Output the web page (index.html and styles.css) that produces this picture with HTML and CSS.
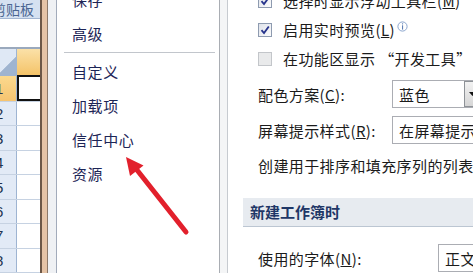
FILE: index.html
```html
<!DOCTYPE html>
<html>
<head>
    <title>Excel 选项</title>
    <link rel="stylesheet" href="styles.css">
</head>
<body>
    <div class="screen">
        <div class="sheet">
            <div class="ribbon-label">剪贴板</div>
            <div class="formula"></div>
            <div class="sheet-row head">
                <div class="corner"></div>
                <div class="col-head"></div>
            </div>
            <div class="sheet-row selected">
                <div class="row-head"><span>1</span></div>
                <div class="cell active"></div>
            </div>
            <div class="sheet-row"><div class="row-head"><span>2</span></div><div class="cell"></div></div>
            <div class="sheet-row"><div class="row-head"><span>3</span></div><div class="cell"></div></div>
            <div class="sheet-row"><div class="row-head"><span>4</span></div><div class="cell"></div></div>
            <div class="sheet-row"><div class="row-head"><span>5</span></div><div class="cell"></div></div>
            <div class="sheet-row"><div class="row-head"><span>6</span></div><div class="cell"></div></div>
            <div class="sheet-row"><div class="row-head"><span>7</span></div><div class="cell"></div></div>
            <div class="sheet-row"><div class="row-head"><span>8</span></div><div class="cell"></div></div>
        </div>

        <div class="frame"></div>
        <div class="frame-inner"></div>

        <div class="nav">
            <div class="nav-item first">保存</div>
            <div class="nav-item">高级</div>
            <div class="nav-sep"></div>
            <div class="nav-item">自定义</div>
            <div class="nav-item">加载项</div>
            <div class="nav-item">信任中心</div>
            <div class="nav-item">资源</div>
        </div>

        <div class="gutter"></div>

        <div class="content">
            <div class="check-row first">
                <span class="checkbox checked"><svg width="10" height="10" viewBox="0 0 10 10"><path d="M1.5 5.2 L4 8 L8.8 1.5" fill="none" stroke="#26338c" stroke-width="1.8"/></svg></span>
                <span class="label">选择时显示浮动工具栏(<u>M</u>)</span>
            </div>
            <div class="check-row">
                <span class="checkbox checked"><svg width="10" height="10" viewBox="0 0 10 10"><path d="M1.5 5.2 L4 8 L8.8 1.5" fill="none" stroke="#26338c" stroke-width="1.8"/></svg></span>
                <span class="label">启用实时预览(<u>L</u>)</span>
                <svg class="info" width="11" height="11" viewBox="0 0 11 11"><circle cx="5.5" cy="5.5" r="4.6" fill="#fff" stroke="#7f9cc8" stroke-width="0.9"/><rect x="5" y="2.3" width="1.1" height="1.1" fill="#5f80b5"/><rect x="5" y="4.3" width="1.1" height="4.3" fill="#5f80b5"/></svg>
            </div>
            <div class="check-row">
                <span class="checkbox disabled"></span>
                <span class="label">在功能区显示 “开发工具” 选项卡(<u>D</u>)</span>
            </div>

            <div class="field-row scheme">
                <span class="field-label">配色方案(<u>C</u>):</span>
                <div class="combo short">
                    <span class="combo-text">蓝色</span>
                    <span class="combo-btn"><svg width="7" height="4" viewBox="0 0 7 4"><path d="M0 0 H7 L3.5 4 Z" fill="#111"/></svg></span>
                </div>
            </div>
            <div class="field-row">
                <span class="field-label">屏幕提示样式(<u>R</u>):</span>
                <div class="combo">
                    <span class="combo-text">在屏幕提示中显示功能说明</span>
                </div>
            </div>
            <div class="text-row">创建用于排序和填充序列的列表：</div>

            <div class="section-head">新建工作簿时</div>

            <div class="field-row font">
                <span class="field-label">使用的字体(<u>N</u>):</span>
                <div class="combo">
                    <span class="combo-text">正文字体</span>
                </div>
            </div>
        </div>

        <svg class="arrow" width="473" height="273" viewBox="0 0 473 273">
            <line x1="186" y1="232" x2="137" y2="170" stroke="#e2202c" stroke-width="5" stroke-linecap="round"/>
            <polygon points="126,157 143.5,165.5 130,176" fill="#e2202c"/>
        </svg>
    </div>
</body>
</html>
```

FILE: styles.css
```css
html, body { margin: 0; padding: 0; }
body {
    width: 473px;
    height: 273px;
    overflow: hidden;
    background: #fff;
    font-family: "Noto Sans CJK SC", "Liberation Sans", sans-serif;
    font-size: 15px;
}
.screen {
    position: relative;
    display: flex;
    height: 273px;
    overflow: hidden;
}

/* spreadsheet strip on the left */
.sheet { width: 40px; flex: none; display: flex; flex-direction: column; overflow: hidden; }
.ribbon-label {
    height: 18px;
    background: #d5e1f1;
    border-bottom: 1px solid #a3b6d2;
    color: #4a6592;
    font-size: 14px;
    line-height: 18px;
    margin-left: -8px;
    white-space: nowrap;
    width: 48px;
}
.formula { height: 29px; border-bottom: 2px solid #9aa9bd; }
.sheet-row { display: flex; height: 24px; border-bottom: 1px solid #c6d2e2; }
.sheet-row.head { height: 27px; border-bottom: none; }
.sheet-row.selected { height: 26px; border-bottom: 1px solid #c6d2e2; }
.corner {
    width: 16px;
    border-right: 1px solid #9eb4d2;
    background: linear-gradient(135deg, #dfe8f5 55%, #9fb4d0 56%);
}
.col-head { flex: 1; background: linear-gradient(#fbe1a8, #f4c266); }
.row-head {
    width: 16px;
    border-right: 1px solid #9eb4d2;
    background: #e2eaf6;
    color: #23344f;
    font-family: "Liberation Sans", sans-serif;
    font-size: 15px;
    overflow: hidden;
    display: flex;
    align-items: center;
}
.row-head span { margin-left: -5px; }
.selected .row-head { background: linear-gradient(#fbd98e, #f6c470); }
.cell { flex: 1; background: #fff; }
.cell.active { border: 2px solid #111; border-right: none; margin-top: -1px; }

/* dialog frame */
.frame { width: 5px; flex: none; background: #e5c3a6; border-left: 2px solid #6c5747; border-right: 1px solid #8c7868; }
.frame-inner { width: 8px; flex: none; background: #eff1f4; border-right: 1px solid #a2abbb; }

/* left navigation */
.nav {
    width: 147px;
    flex: none;
    padding-left: 15px;
    border-right: 1px solid #a9adb3;
    color: #1d2556;
    letter-spacing: 0.6px;
}
.nav-item { height: 34px; line-height: 34px; white-space: nowrap; }
.nav-item.first { margin-top: -17px; }
.nav-sep { height: 1px; background: #c2c6cc; margin: 1px 4px 2px -8px; }

.gutter { width: 7px; flex: none; background: #f4f5f6; border-right: 1px solid #c7cbd0; }

/* options content */
.content { flex: 1; padding-left: 30px; color: #1b1b1b; white-space: nowrap; letter-spacing: 0.4px; }
.check-row { height: 29px; display: flex; align-items: center; }
.check-row.first { margin-top: -14px; }
.checkbox {
    width: 12px;
    height: 12px;
    flex: none;
    border: 1px solid #8e9bb0;
    background: linear-gradient(135deg, #dfe3ea, #fbfbfc);
    display: flex;
    align-items: center;
    justify-content: center;
    margin-right: 11px;
}
.checkbox.disabled { border-color: #c3c6ca; background: #e9eaeb; }
.info { align-self: flex-start; margin-top: 6px; margin-left: 2px; }

.field-row { display: flex; align-items: center; height: 28px; margin-top: 8px; }
.field-row.scheme { margin-top: 7px; }
.field-row.font { height: 30px; margin-top: 16px; }
.field-label { width: 134px; flex: none; }
.font .field-label { width: 180px; }
.combo {
    display: flex;
    align-items: center;
    height: 26px;
    width: 120px;
    flex: none;
    border: 1px solid #abadb3;
    background: #fff;
    overflow: hidden;
}
.combo.short { width: 88px; }
.combo-text { padding-left: 6px; flex: 1; overflow: hidden; }
.combo-btn {
    width: 15px;
    height: 24px;
    border: 1px solid #8e9297;
    background: linear-gradient(#f2f2f2, #d6d6d6);
    display: flex;
    align-items: center;
    justify-content: center;
}
.text-row { height: 28px; line-height: 28px; margin-top: 8px; }

.section-head {
    margin-top: 18px;
    margin-left: -15px;
    padding-left: 7px;
    height: 28px;
    line-height: 28px;
    background: #e7ebf0;
    border-bottom: 1px solid #bcc6d2;
    color: #1f3767;
    font-weight: bold;
    letter-spacing: 0;
}

.arrow { position: absolute; left: 0; top: 0; pointer-events: none; }
```
